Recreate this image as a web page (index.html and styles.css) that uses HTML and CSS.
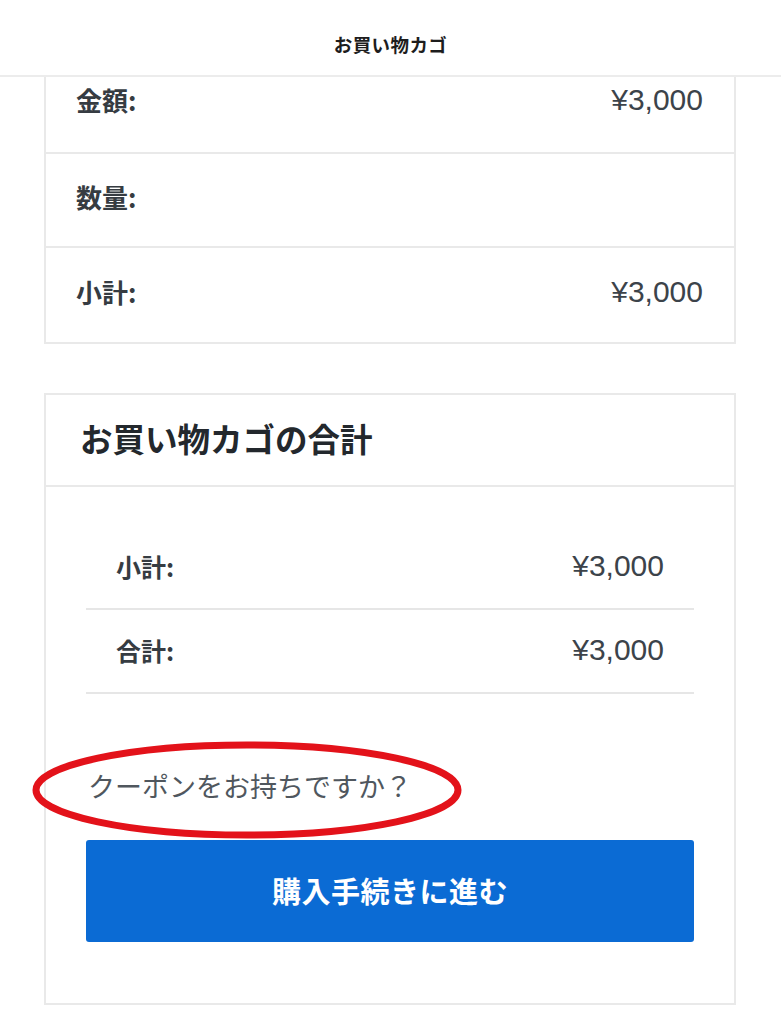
FILE: index.html
```html
<!DOCTYPE html>
<html lang="ja">
<head>
<meta charset="utf-8">
<title>お買い物カゴ</title>
<link rel="stylesheet" href="styles.css">
</head>
<body>
<header class="topbar">
  <h1 class="topbar-title">お買い物カゴ</h1>
</header>
<main class="page">
  <section class="card card-cut">
    <div class="item-row first">
      <span class="label">金額:</span>
      <span class="value">¥3,000</span>
    </div>
    <div class="item-row">
      <span class="label">数量:</span>
      <span class="value"></span>
    </div>
    <div class="item-row">
      <span class="label">小計:</span>
      <span class="value">¥3,000</span>
    </div>
  </section>

  <section class="card totals">
    <h2 class="totals-title">お買い物カゴの合計</h2>
    <div class="totals-body">
      <div class="totals-table">
        <div class="totals-row">
          <span class="label small">小計:</span>
          <span class="value">¥3,000</span>
        </div>
        <div class="totals-row">
          <span class="label small">合計:</span>
          <span class="value">¥3,000</span>
        </div>
      </div>
      <p class="coupon">
        <span class="coupon-text">クーポンをお持ちですか？</span>
        <svg class="annotation" width="434" height="100" viewBox="0 0 434 100" aria-hidden="true">
          <ellipse cx="217" cy="50" rx="211" ry="45" fill="none" stroke="#e3121a" stroke-width="7"/>
        </svg>
      </p>
      <a class="checkout-btn" href="#">購入手続きに進む</a>
    </div>
  </section>
</main>
</body>
</html>
```
FILE: styles.css
```css
* { box-sizing: border-box; }

html, body {
  margin: 0;
  padding: 0;
  background: #ffffff;
}

body {
  font-family: "Noto Sans CJK JP", "Noto Sans", "Liberation Sans", sans-serif;
  color: #3c434a;
  height: 1024px;
  overflow: hidden;
}

.topbar {
  height: 77px;
  border-bottom: 2px solid #ececec;
  display: flex;
  align-items: center;
  justify-content: center;
  background: #fff;
}

.topbar-title {
  margin: 0;
  padding-top: 12px;
  font-size: 18.5px;
  font-weight: 700;
  color: #1d1d1d;
  letter-spacing: 0.4px;
}

.page {
  padding: 0 45px 0 44px;
  display: flex;
  flex-direction: column;
  gap: 49px;
}

.card {
  border: 2px solid #e9e9e9;
  background: #fff;
}

.card-cut {
  border-top: none;
}

.item-row {
  height: 94px;
  padding: 0 31px 7px 30px;
  display: flex;
  align-items: center;
  justify-content: space-between;
  border-bottom: 2px solid #e9e9e9;
}

.item-row:last-child {
  border-bottom: none;
}

.item-row.first {
  height: 77px;
  align-items: flex-start;
  padding-top: 5px;
  padding-bottom: 0;
}

.label {
  font-size: 26px;
  font-weight: 700;
  color: #363c42;
  line-height: 36px;
}

.value {
  font-family: "Liberation Sans", "Noto Sans CJK JP", sans-serif;
  font-size: 30px;
  font-weight: 400;
  color: #3c434a;
  line-height: 36px;
}

.totals-title {
  margin: 0;
  height: 92px;
  display: flex;
  align-items: center;
  padding: 0 0 6px 34px;
  font-size: 32.5px;
  font-weight: 700;
  color: #23282d;
  border-bottom: 2px solid #e9e9e9;
}

.totals-body {
  padding: 39px 40px 61px 40px;
  display: flex;
  flex-direction: column;
}

.totals-table {
  display: flex;
  flex-direction: column;
}

.totals-row {
  height: 84px;
  padding: 0 30px 2px 30px;
  display: flex;
  align-items: center;
  justify-content: space-between;
  border-bottom: 2px solid #e6e6e6;
}

.label.small {
  font-size: 25px;
}

.coupon {
  position: relative;
  margin: 73px 0 0 0;
  height: 40px;
  padding-left: 2px;
  padding-bottom: 2px;
  display: flex;
  align-items: center;
}

.coupon-text {
  font-size: 27px;
  font-weight: 400;
  color: #50575e;
  line-height: 38px;
}

.annotation {
  position: absolute;
  left: -56px;
  top: -27px;
  pointer-events: none;
}

.checkout-btn {
  margin-top: 33px;
  height: 102px;
  padding-bottom: 2px;
  background: #0b6bd4;
  border-radius: 3px;
  color: #ffffff;
  text-decoration: none;
  font-size: 29px;
  font-weight: 700;
  display: flex;
  align-items: center;
  justify-content: center;
  letter-spacing: 0.5px;
}
```
